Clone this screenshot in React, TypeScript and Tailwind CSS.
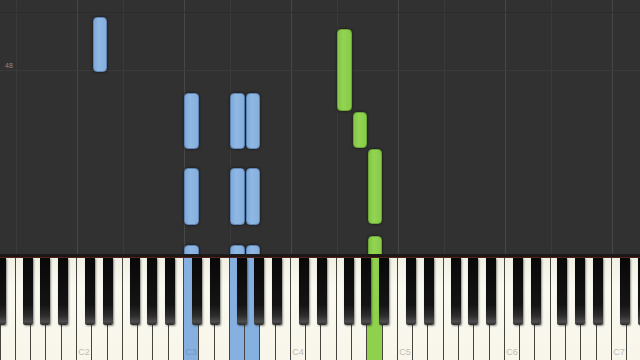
import React from "react";

const W = 107 / 7;
const X0 = -14.72; // left edge of D1

// white keys from D1 to D7
const WHITE_NAMES = ["C", "D", "E", "F", "G", "A", "B"];
const whites: { name: string; octave: number }[] = [];
for (let i = 0; i < 43; i++) {
  const n = (i + 1) % 7;
  const octave = 1 + Math.floor((i + 1) / 7);
  whites.push({ name: WHITE_NAMES[n], octave });
}

// black key to the right of a white key, shifted a little like the real layout
const BLACK_SHIFT: Record<string, string> = {
  C: "-right-[4px]",
  D: "-right-[6.5px]",
  F: "-right-[2.5px]",
  G: "-right-[5px]",
  A: "-right-[7px]",
};

const blueKeys = ["C3", "F3", "G3"];
const greenKeys = ["A4"];

type Note = { key: string; top: number; bottom: number; hand: "l" | "r" };

const notes: Note[] = [
  { key: "D2", top: 17, bottom: 72, hand: "l" },
  { key: "C3", top: 93, bottom: 149, hand: "l" },
  { key: "F3", top: 93, bottom: 149, hand: "l" },
  { key: "G3", top: 93, bottom: 149, hand: "l" },
  { key: "C3", top: 168, bottom: 225, hand: "l" },
  { key: "F3", top: 168, bottom: 225, hand: "l" },
  { key: "G3", top: 168, bottom: 225, hand: "l" },
  { key: "C3", top: 245, bottom: 270, hand: "l" },
  { key: "F3", top: 245, bottom: 270, hand: "l" },
  { key: "G3", top: 245, bottom: 270, hand: "l" },
  { key: "F4", top: 29, bottom: 111, hand: "r" },
  { key: "G4", top: 112, bottom: 148, hand: "r" },
  { key: "A4", top: 149, bottom: 224, hand: "r" },
  { key: "A4", top: 236, bottom: 270, hand: "r" },
];

function keyX(key: string) {
  const i = whites.findIndex((w) => w.name + w.octave === key);
  return X0 + i * W;
}

function NoteBar({ n }: { n: Note }) {
  const left = keyX(n.key) + 0.4;
  const cls =
    n.hand === "l"
      ? "bg-[linear-gradient(to_right,#7fa9d9,#8fb8e4_40%,#86afdd)] border-[#5d84b3]"
      : "bg-[linear-gradient(to_right,#84c744,#93d452_40%,#88cb47)] border-[#6aa636]";
  return (
    <div
      className={`absolute rounded-[4px] border shadow-[0_0_3px_rgba(0,0,0,0.6)] ${cls}`}
      style={{ left, top: n.top, width: W - 0.8, height: n.bottom - n.top }}
    />
  );
}

const octaves = [1, 2, 3, 4, 5, 6, 7];

export default function App() {
  return (
    <div className="w-[640px] h-[360px] overflow-hidden flex flex-col bg-[#303030] font-['Liberation_Sans',sans-serif]">
      {/* falling notes area */}
      <div className="relative h-[254px] shrink-0 overflow-hidden bg-[#313131]">
        {/* lanes: a line at each C and F */}
        <div className="flex h-full -ml-[30px]">
          {octaves.map((o) => (
            <div key={o} className="flex h-full shrink-0">
              <div className="w-[45.857px] h-full border-l border-[#474747]" />
              <div className="w-[61.143px] h-full border-l border-[#3a3a3a]" />
            </div>
          ))}
        </div>
        <div className="absolute inset-x-0 top-[12px] h-[59px] border-t border-b border-t-[#2c2c2c] border-b-[#3a3a3a] flex items-end pl-[5px] pb-[1px]">
          <span className="text-[7px] leading-none text-[#8a8a8a]">48</span>
        </div>
        {notes.map((n, i) => (
          <NoteBar key={i} n={n} />
        ))}
      </div>

      {/* keyboard rail */}
      <div className="h-[4px] shrink-0 bg-[linear-gradient(to_bottom,#1e1e1e,#1a1513_60%,#6a2e20)]" />

      {/* keyboard */}
      <div className="flex-1 flex bg-[#1a1a1a]">
        <div className="flex -ml-[14.72px]">
          {whites.map((w, i) => {
            const id = w.name + w.octave;
            const isBlue = blueKeys.includes(id);
            const isGreen = greenKeys.includes(id);
            const bg = isBlue
              ? "bg-[#86b0df]"
              : isGreen
              ? "bg-[#8fd14d]"
              : "bg-[linear-gradient(to_bottom,#f2f0e4,#fbfaf1_30%,#f8f6ea)]";
            const black = BLACK_SHIFT[w.name];
            return (
              <div
                key={i}
                className={`relative w-[15.2857px] h-full shrink-0 border-r border-[#46443f] ${bg} flex items-end justify-center pb-[3px]`}
              >
                {w.name === "C" && (
                  <span className={`text-[9px] leading-none ${isBlue ? "text-[#6f95c2]" : "text-[#bdbcb3]"}`}>
                    {id}
                  </span>
                )}
                {black && (
                  <div
                    className={`absolute top-0 z-10 h-[67px] w-[10px] rounded-b-[2px] bg-[linear-gradient(to_bottom,#080808,#141414_70%,#2c2c2c_86%,#4d4d4d_95%,#2a2a2a)] shadow-[1px_1px_2px_rgba(0,0,0,0.45)] ${black}`}
                  />
                )}
              </div>
            );
          })}
        </div>
      </div>
    </div>
  );
}
